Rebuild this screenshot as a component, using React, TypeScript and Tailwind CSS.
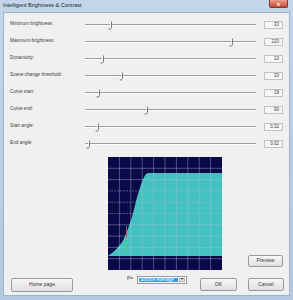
import React from 'react';

const rows = [
    { label: 'Minimum brightness:',     value: '33',   pos: 26 },
    { label: 'Maximum brightness:',     value: '220',  pos: 147 },
    { label: 'Dynamicity:',             value: '10',   pos: 18 },
    { label: 'Scene change threshold:', value: '20',   pos: 37 },
    { label: 'Curve start:',            value: '19',   pos: 14 },
    { label: 'Curve end:',              value: '90',   pos: 62 },
    { label: 'Start angle:',            value: '0.32', pos: 13 },
    { label: 'End angle:',              value: '0.02', pos: 4 },
];

function Slider({ pos }: { pos: number }) {
    return (
        <div className="relative h-full w-[171px] shrink-0">
            <div className="absolute left-0 right-0 top-[8px] h-px bg-[#9c9c9c]" />
            <div className="absolute left-0 right-0 top-[9px] h-px bg-[#fdfdfd]" />
            <svg className="absolute top-[5px]" style={{ left: pos - 3 }} width="5" height="9" viewBox="0 0 5 9">
                <path d="M3.5 0.5 V6.5 L2.5 8 H0.5" fill="none" stroke="#7a7a7a" strokeWidth="1" />
                <path d="M2.5 1 V6" fill="none" stroke="#ffffff" strokeWidth="0.8" />
            </svg>
        </div>
    );
}

function Btn({ children, className }: { children: React.ReactNode; className: string }) {
    return (
        <div className={`flex items-center justify-center rounded-[2px] border border-[#9a9a9a] bg-gradient-to-b from-[#f7f7f7] to-[#e0e0e0] text-[5px] text-[#333] ${className}`}>
            {children}
        </div>
    );
}

function Graph() {
    const W = 114, H = 113;
    const cols = Array.from({ length: 9 }, (_, i) => (i + 1) * 11.4);
    const rowsY = Array.from({ length: 9 }, (_, i) => (i + 1) * 11.3);
    return (
        <svg width={W} height={H} viewBox={`0 0 ${W} ${H}`} className="block shrink-0">
            <rect width={W} height={H} fill="#0b0a48" />
            <path d="M0 99 C4 96 8 93 10 90 C13 87 15 84 17 79 C20 72 22 66 24 60 C27 50 28 42 31 34 C33 27 35 21 38 17 L40 16 H114 V99 Z" fill="#44c2c0" />
            {cols.map((x) => (
                <line key={`c${x}`} x1={x} y1={0} x2={x} y2={H} stroke="#b9b9e0" strokeOpacity="0.5" strokeWidth="0.8" />
            ))}
            {rowsY.map((y) => (
                <line key={`r${y}`} x1={0} y1={y} x2={W} y2={y} stroke="#b9b9e0" strokeOpacity="0.5" strokeWidth="0.8" strokeDasharray={y > 30 && y < 60 ? '2 1' : undefined} />
            ))}
            <line x1={18.5} y1={69} x2={18.5} y2={80} stroke="#a85a4a" strokeWidth="1" />
            <line x1={18.5} y1={80} x2={18.5} y2={99} stroke="#3fd37a" strokeWidth="1" />
        </svg>
    );
}

export default function App() {
    return (
        <div className="flex h-[300px] w-[293px] flex-col bg-gradient-to-b from-[#c3d5ea] to-[#b3c9e0] font-['Liberation_Sans',Arial,sans-serif] text-[#3a3a3a]">

            <div className="flex h-[12px] shrink-0 items-center pl-[3px]">
                <span className="text-[5.5px] leading-none text-[#1e1e1e]">Intelligent Brightness &amp; Contrast</span>
                <div className="ml-auto mr-[5px] flex h-[8px] w-[19px] items-center justify-center self-start rounded-b-[2px] border border-t-0 border-[#8a3a30] bg-gradient-to-b from-[#e8a090] to-[#c8402a]">
                    <span className="text-[6px] font-bold leading-none text-white">x</span>
                </div>
            </div>

            <div className="mx-[3px] mb-[4px] flex flex-1 flex-col border border-[#9fb2c6] bg-[#f0f0f0] pt-[3px]">

                {rows.map((r) => (
                    <div key={r.label} className="flex h-[17px] shrink-0">
                        <div className="flex w-[81px] shrink-0 items-center pl-[6px] text-[4.7px] leading-none">{r.label}</div>
                        <Slider pos={r.pos} />
                        <div className="ml-[8px] mt-[5px] flex h-[8px] w-[19px] items-center justify-end border border-[#c2c2c2] bg-[#f6f6f6] pr-[3px] text-[4.5px] leading-none">
                            {r.value}
                        </div>
                    </div>
                ))}

                <div className="mt-[5px] flex shrink-0">
                    <div className="ml-[104px]">
                        <Graph />
                    </div>
                    <Btn className="mb-[3px] ml-[26px] h-[12px] w-[35px] self-end">Preview</Btn>
                </div>

                <div className="mt-[6px] flex h-[16px] shrink-0 items-start">
                    <Btn className="ml-[7px] mt-[2px] h-[14px] w-[62px]">Home page</Btn>
                    <span className="ml-[54px] mt-[1px] text-[4.7px] leading-none">P=</span>
                    <div className="ml-[4px] flex h-[8px] w-[50px] items-center border border-[#9a9a9a] bg-white p-px">
                        <div className="flex h-full flex-1 items-center bg-[#3399ff] pl-px text-[4.8px] leading-none text-white">Source Average</div>
                        <div className="ml-px flex h-full w-[6px] items-center justify-center border border-[#b0b0b0] bg-[#e8e8e8] text-[3.5px] leading-none text-[#222]">▼</div>
                    </div>
                    <Btn className="ml-[13px] mt-[2px] h-[13px] w-[37px]">OK</Btn>
                    <Btn className="ml-[11px] mt-[2px] h-[13px] w-[36px]">Cancel</Btn>
                </div>
            </div>
        </div>
    );
}
